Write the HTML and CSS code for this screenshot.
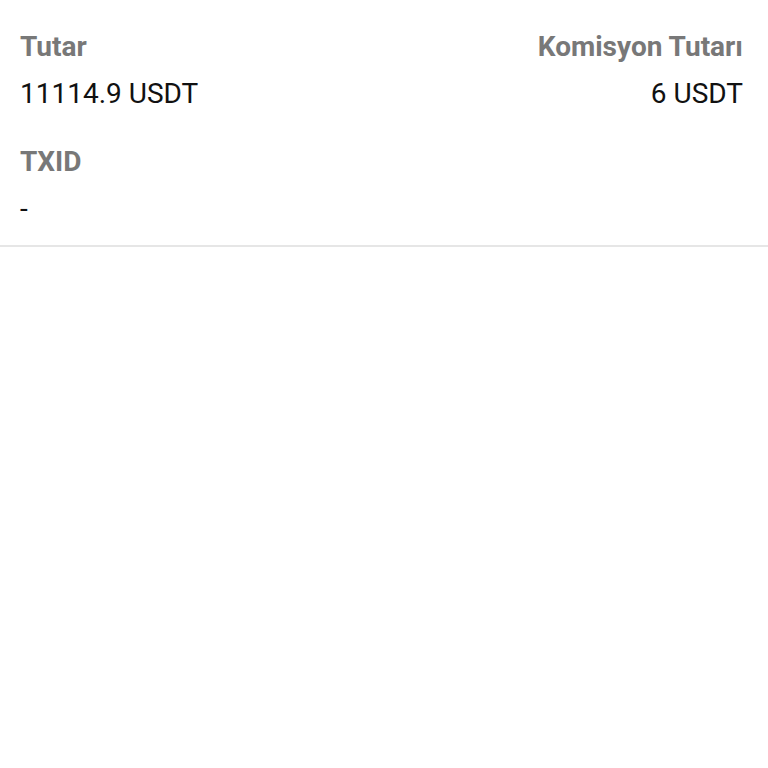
FILE: index.html
```html
<!DOCTYPE html>
<html lang="tr">
<head>
  <meta charset="UTF-8" />
  <meta name="viewport" content="width=device-width, initial-scale=1.0"/>
  <title>İşlem Detayı</title>
  <link rel="stylesheet" href="styles.css">
</head>
<body>
  <div class="details">
    <div class="row">
      <div class="field">
        <div class="label">Tutar</div>
        <div class="value">11114.9 USDT</div>
      </div>
      <div class="field right">
        <div class="label">Komisyon Tutarı</div>
        <div class="value">6 USDT</div>
      </div>
    </div>
    <div class="row">
      <div class="field">
        <div class="label">TXID</div>
        <div class="value">-</div>
      </div>
    </div>
  </div>
</body>
</html>
```

FILE: styles.css
```css
:root {
  --label: #787878;
  --text: #111111;
  --divider: #e6e6e6;
}

body {
  margin: 0;
  background: #ffffff;
  font-family: Roboto, "Noto Sans", sans-serif;
}

.details {
  padding: 23px 25px 13px 20px;
  border-bottom: 2px solid var(--divider);
}

.row {
  display: flex;
  justify-content: space-between;
  margin-bottom: 21px;
}

.row:last-child {
  margin-bottom: 0;
}

.field.right {
  text-align: right;
}

.label {
  font-size: 28px;
  font-weight: 700;
  color: var(--label);
  line-height: 47px;
}

.value {
  font-size: 28px;
  color: var(--text);
  line-height: 47px;
}
```
